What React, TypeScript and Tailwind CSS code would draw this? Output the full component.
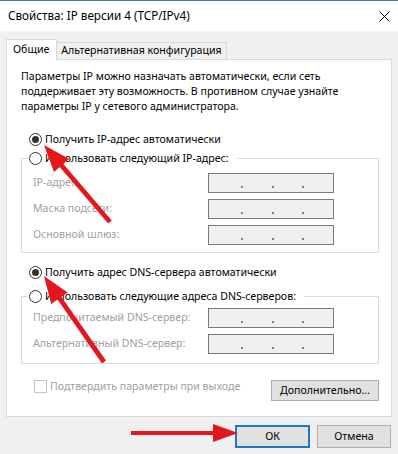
import React from "react";

type Pt = [number, number];

// точки стрелки: хвост -> острие
function arrowPoints(tail: Pt, tip: Pt, head = 27, half = 10, shaft = 2.4): string {
  const [x1, y1] = tail;
  const [x2, y2] = tip;
  const len = Math.hypot(x2 - x1, y2 - y1);
  const ux = (x2 - x1) / len;
  const uy = (y2 - y1) / len;
  const nx = -uy;
  const ny = ux;
  const bx = x2 - ux * head;
  const by = y2 - uy * head;
  const pts: Pt[] = [
    [x1 + nx * shaft, y1 + ny * shaft],
    [bx + nx * shaft, by + ny * shaft],
    [bx + nx * half, by + ny * half],
    [x2, y2],
    [bx - nx * half, by - ny * half],
    [bx - nx * shaft, by - ny * shaft],
    [x1 - nx * shaft, y1 - ny * shaft],
  ];
  return pts.map((p) => p.map((v) => v.toFixed(1)).join(",")).join(" ");
}

function Radio({ checked }: { checked?: boolean }) {
  return (
    <span className="flex h-[13px] w-[13px] shrink-0 items-center justify-center rounded-full border border-[#333333] bg-white">
      {checked && <span className="h-[7px] w-[7px] rounded-full bg-[#333333]" />}
    </span>
  );
}

function IpBox() {
  return (
    <div className="flex h-5 w-[126px] shrink-0 items-end border border-[#7a7a7a] bg-[#f0f0f0] pb-[4px]">
      <span className="ml-[32px] h-[2px] w-[2px] bg-[#808080]" />
      <span className="ml-[29px] h-[2px] w-[2px] bg-[#808080]" />
      <span className="ml-[28px] h-[2px] w-[2px] bg-[#808080]" />
    </div>
  );
}

function Field({ label }: { label: string }) {
  return (
    <div className="flex items-center pr-[44px] pl-[11px]">
      <span className="flex-1 text-[#a0a0a0]">{label}</span>
      <IpBox />
    </div>
  );
}

function Group({ legend, fields, className }: { legend: string; fields: string[]; className: string }) {
  return (
    <fieldset className={`ml-[14px] w-[358px] border border-[#dcdcdc] ${className}`}>
      <legend className="ml-[6px] pr-[8px] pl-px">
        <span className="flex h-[15px] items-center gap-[3px]">
          <Radio />
          <span>{legend}</span>
        </span>
      </legend>
      <div className="flex flex-col gap-[6px]">
        {fields.map((f) => (
          <Field key={f} label={f} />
        ))}
      </div>
    </fieldset>
  );
}

export default function App() {
  return (
    <div className="relative h-[454px] w-[398px] overflow-hidden bg-[#f0f0f0] font-['Segoe_UI','Noto_Sans',sans-serif] text-[10.6px] text-black">
      <div className="flex h-[31px] items-center justify-between border-t border-[#3b7a96] bg-white pr-[8px] pl-[8px]">
        <span className="text-[11.7px]">Свойства: IP версии 4 (TCP/IPv4)</span>
        <svg width="11" height="11" viewBox="0 0 11 11" className="text-black">
          <path d="M0.5 0.5 L10.5 10.5 M10.5 0.5 L0.5 10.5" stroke="currentColor" strokeWidth="1" />
        </svg>
      </div>

      <div className="px-[6px] pt-[8px]">
        <div className="flex items-end">
          <div className="relative z-10 -mb-px flex h-[21px] items-center border border-b-0 border-[#d9d9d9] bg-white pr-[7px] pl-[6px]">
            Общие
          </div>
          <div className="flex h-[17px] items-center border border-b-0 border-l-0 border-[#d9d9d9] px-[4px]">
            Альтернативная конфигурация
          </div>
        </div>

        <div className="h-[358px] border border-[#d9d9d9] bg-white">
          <p className="pt-[9px] pl-[14px] leading-[15px]">
            Параметры IP можно назначать автоматически, если сеть
            <br />
            поддерживает эту возможность. В противном случае узнайте
            <br />
            параметры IP у сетевого администратора.
          </p>

          <div className="mt-[18px] flex h-[15px] items-center gap-[3px] pl-[22px]">
            <Radio checked />
            <span>Получить IP-адрес автоматически</span>
          </div>

          <Group
            className="mt-[4px] pt-[7px] pb-[7px]"
            legend="Использовать следующий IP-адрес:"
            fields={["IP-адрес:", "Маска подсети:", "Основной шлюз:"]}
          />

          <div className="mt-[12px] flex h-[15px] items-center gap-[3px] pl-[22px]">
            <Radio checked />
            <span>Получить адрес DNS-сервера автоматически</span>
          </div>

          <Group
            className="mt-[9px] pt-[4px] pb-[9px]"
            legend="Использовать следующие адреса DNS-серверов:"
            fields={["Предпочитаемый DNS-сервер:", "Альтернативный DNS-сервер:"]}
          />

          <div className="mt-[16px] flex items-start justify-between pr-[12px] pl-[27px]">
            <div className="flex h-[13px] items-center gap-[3px]">
              <span className="h-[13px] w-[13px] border border-[#c4c4c4] bg-white" />
              <span className="text-[#a0a0a0]">Подтвердить параметры при выходе</span>
            </div>
            <button className="flex h-[21px] w-[108px] items-center justify-center border border-[#adadad] bg-[#e1e1e1]">
              Дополнительно...
            </button>
          </div>
        </div>
      </div>

      <div className="mt-[8px] flex justify-end gap-[7px] pr-[7px]">
        <button className="flex h-[23px] w-[75px] items-center justify-center border-2 border-[#1e78c8] bg-[#e1e1e1]">
          ОК
        </button>
        <button className="flex h-[23px] w-[74px] items-center justify-center border border-[#adadad] bg-[#e1e1e1]">
          Отмена
        </button>
      </div>

      <svg className="pointer-events-none absolute inset-0 z-20" width="398" height="454" viewBox="0 0 398 454">
        <polygon points={arrowPoints([110, 222], [44, 145])} fill="#e3171c" />
        <polygon points={arrowPoints([104, 362], [44, 276])} fill="#e3171c" />
        <polygon points={arrowPoints([131, 433], [238, 433], 25, 9, 2.1)} fill="#e3171c" />
      </svg>
    </div>
  );
}
